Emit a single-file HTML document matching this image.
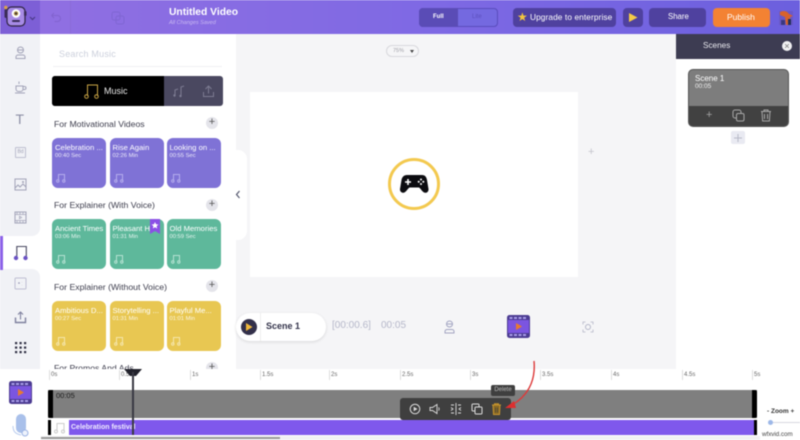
<!DOCTYPE html>
<html><head><meta charset="utf-8"><style>
*{box-sizing:border-box;margin:0;padding:0}
html,body{width:800px;height:440px;overflow:hidden;background:#fff;font-family:"Liberation Sans",sans-serif}
#w{position:relative;width:800px;height:440px;overflow:hidden;filter:blur(.5px)}
.a{position:absolute}
.t{position:absolute;white-space:nowrap;line-height:1}
.card{position:absolute;width:54px;height:50px;border-radius:6px;color:#fff}
.card b{position:absolute;left:3px;top:5px;font-weight:normal;font-size:7.7px;white-space:nowrap;width:50px;overflow:hidden}
.card i{position:absolute;left:3px;top:15px;font-style:normal;font-size:5.8px;opacity:.85;white-space:nowrap}
.card svg{position:absolute;left:4px;top:35px}
.h{position:absolute;left:54px;font-size:8.7px;color:#3c3c4c;white-space:nowrap}
.pl{position:absolute;left:206px;width:12px;height:12px;border-radius:50%;background:#e4e4ea;color:#555;font-size:11px;line-height:11px;text-align:center}
.r{position:absolute;top:370px;height:10px;border-left:1px solid #ddd;padding-left:1px;font-size:6px;line-height:10px;color:#666}
svg{display:block}
</style></head><body><div id="w">
<div class="a" style="left:0;top:0;width:800px;height:34px;background:linear-gradient(90deg,#9270e2 0%,#7e69e4 55%,#6c60de 100%)"></div>
<div class="a" style="left:0;top:0;width:40px;height:34px;background:#7d5fd6"></div>
<svg class="a" style="left:3px;top:4px" width="24" height="24" viewBox="0 0 24 24"><rect x="4" y="3" width="18" height="19" rx="4.500" fill="#a78be6" stroke="#2e2440" stroke-width="1.200"/><rect x="1.500" y="5" width="3" height="9" rx="1.500" fill="#3a2c58"/><circle cx="2.800" cy="3.500" r="1.700" fill="#d9a24c"/><rect x="21" y="7" width="2.500" height="5" rx="1" fill="#3a2c58"/><circle cx="13" cy="9.500" r="4.300" fill="#fff"/><circle cx="13" cy="9.500" r="2.200" fill="#a78a3a"/><circle cx="13" cy="9.500" r="1" fill="#2e2440"/><rect x="9" y="16" width="8" height="2" rx="1" fill="#3a2c58"/></svg>
<svg class="a" style="left:29px;top:16px" width="7" height="5" viewBox="0 0 7 5"><path d="M1 1l2.500 2.500L6 1" stroke="#4a3a86" stroke-width="1.200" fill="none"/></svg>
<svg class="a" style="left:50px;top:12px" width="12" height="11" viewBox="0 0 12 11"><path d="M1.500 3.500h6a3 3 0 0 1 0 6h-3M1.500 3.500L4 1M1.500 3.500L4 6" stroke="#8163cf" fill="none"/></svg>
<div class="a" style="left:70px;top:0;width:1px;height:34px;background:#8a6cd8"></div>
<svg class="a" style="left:111px;top:11px" width="14" height="14" viewBox="0 0 14 14"><rect x="1" y="1" width="8" height="8" rx="2" stroke="#7f66d2" fill="none"/><rect x="5" y="5" width="8" height="8" rx="2" stroke="#7f66d2" fill="none"/></svg>
<div class="t" style="left:169px;top:8px;color:#fff;font-weight:bold;font-size:10.300px">Untitled Video</div>
<div class="t" style="left:169px;top:21px;color:#c9b9f2;font-size:5.500px;font-style:italic">All Changes Saved</div>
<div class="a" style="left:419px;top:8px;width:79px;height:19px;border-radius:4px;background:#7469e0;border:1px solid #5a4cbc"></div>
<div class="a" style="left:419px;top:8px;width:39px;height:19px;border-radius:4px 0 0 4px;background:#5a4cb6"></div>
<div class="t" style="left:433px;top:14px;color:#fff;font-size:6px;font-weight:bold">Full</div>
<div class="t" style="left:472px;top:14px;color:#5c4fbe;font-size:6px">Lite</div>
<div class="a" style="left:513px;top:8px;width:103px;height:19px;border-radius:4px;background:#4f419f"></div>
<div class="t" style="left:517px;top:11px;color:#f4c63d;font-size:12px">★</div>
<div class="t" style="left:530px;top:13px;color:#fff;font-size:8.300px;letter-spacing:.1px">Upgrade to enterprise</div>
<div class="a" style="left:623px;top:8px;width:20px;height:19px;border-radius:4px;background:#4f419f"></div>
<svg class="a" style="left:628px;top:12px" width="11" height="11" viewBox="0 0 11 11"><path d="M1 1l8.500 4.500L1 10z" fill="#f4cb47"/></svg>
<div class="a" style="left:649px;top:8px;width:57px;height:19px;border-radius:4px;background:#4f419f"></div>
<div class="t" style="left:668px;top:13px;color:#fff;font-size:7.800px">Share</div>
<div class="a" style="left:713px;top:8px;width:57px;height:19px;border-radius:4px;background:#f38233"></div>
<div class="t" style="left:727px;top:13px;color:#fff;font-size:8.500px">Publish</div>
<svg class="a" style="left:778px;top:9px" width="17" height="17" viewBox="0 0 17 17"><rect x="1" y="2" width="14" height="14" fill="#6a58c8"/><path d="M2 3c4-2 7-1 9 2l4 2-3 1 1 8H8L7 8 2 6z" fill="#d8622c"/><path d="M10 10h3v6h-3z" fill="#24305c"/><path d="M3 11h4v5H3z" fill="#3b3880"/></svg>

<div class="a" style="left:0;top:34px;width:40px;height:335px;background:#fff"></div>
<div class="a" style="left:0;top:34px;width:40px;height:202px;background:#f1f2f6;border-radius:0 0 8px 0"></div>
<div class="a" style="left:0;top:269px;width:40px;height:100px;background:#f1f2f6;border-radius:0 8px 0 0"></div>
<div class="a" style="left:0;top:236px;width:3px;height:34px;background:#8c62e8"></div>
<svg class="a" style="left:14px;top:46px" width="13" height="14" viewBox="0 0 13 14"><circle cx="6.500" cy="4" r="3" fill="none" stroke="#a2a3b8"/><path d="M3.500 4h6M2 12.500V11a2 2 0 0 1 2-2h5a2 2 0 0 1 2 2v1.500z" fill="none" stroke="#a2a3b8"/></svg>
<svg class="a" style="left:14px;top:80px" width="13" height="14" viewBox="0 0 13 14"><path d="M2 6h7v3a2.500 2.500 0 0 1-2.500 2.500h-2A2.500 2.500 0 0 1 2 9zM9 6.500h1.500a1.300 1.300 0 0 1 0 3H9M1 13h10M5 1.500V4" fill="none" stroke="#a2a3b8"/></svg>
<div class="t" style="left:15.500px;top:112px;color:#8d90a6;font-size:14px">T</div>
<div class="a" style="left:15px;top:147px;width:11px;height:11px;border:1px solid #bdbfd0;border-radius:1px;color:#a0a2b6;font-size:5px;line-height:9px;text-align:center">Bd</div>
<svg class="a" style="left:14px;top:178px" width="13" height="13" viewBox="0 0 13 13"><rect x="1" y="1" width="11" height="11" fill="none" stroke="#a2a3b8"/><path d="M1 10l3-3 2 2 3-3 3 3" fill="none" stroke="#a2a3b8"/><circle cx="9" cy="4" r="1" fill="#a2a3b8"/></svg>
<svg class="a" style="left:14px;top:211px" width="13" height="13" viewBox="0 0 13 13"><rect x="1" y="1" width="11" height="11" fill="none" stroke="#a2a3b8"/><path d="M1 3.500h11M1 9.500h11M3 1v2.500M6 1v2.500M9 1v2.500M3 9.500V12M6 9.500V12M9 9.500V12M5.500 5.200l2.200 1.300-2.200 1.300z" fill="none" stroke="#a2a3b8" stroke-width=".7"/></svg>
<svg class="a" style="left:13px;top:245px" width="15" height="16" viewBox="0 0 15 16"><path d="M3.800 13V1.500h9.500V13" fill="none" stroke="#47475f" stroke-width="1.100"/><circle cx="3" cy="13" r="2.200" fill="#6b52c4"/><circle cx="12.500" cy="13" r="2.200" fill="#6b52c4"/></svg>
<svg class="a" style="left:14px;top:277px" width="13" height="13" viewBox="0 0 13 13"><rect x="1" y="1" width="11" height="11" rx="1" fill="none" stroke="#bdbfd2"/><circle cx="5" cy="6" r=".8" fill="#8a8cab"/><path d="M8 5v.1M8 8v.1" stroke="#8a8cab"/></svg>
<svg class="a" style="left:14px;top:310px" width="13" height="14" viewBox="0 0 13 14"><path d="M6.500 9.500V2M4 4.500L6.500 2 9 4.500" fill="none" stroke="#7f819e" stroke-width="1.100"/><path d="M1.500 7.500v5h10v-5" fill="none" stroke="#7f819e" stroke-width="1.400"/></svg>
<svg class="a" style="left:15px;top:342px" width="12" height="12" viewBox="0 0 12 12" fill="#2e2e42"><rect x="0" y="0" width="2.200" height="2.200"/><rect x="4.500" y="0" width="2.200" height="2.200"/><rect x="9" y="0" width="2.200" height="2.200"/><rect x="0" y="4.500" width="2.200" height="2.200"/><rect x="4.500" y="4.500" width="2.200" height="2.200"/><rect x="9" y="4.500" width="2.200" height="2.200"/><rect x="0" y="9" width="2.200" height="2.200"/><rect x="4.500" y="9" width="2.200" height="2.200"/><rect x="9" y="9" width="2.200" height="2.200"/></svg>

<div class="t" style="left:59px;top:50px;color:#ccd0dc;font-size:9px;letter-spacing:.2px">Search Music</div>
<div class="a" style="left:53px;top:66px;width:169px;height:1px;background:#f0f0f3"></div>
<div class="a" style="left:52px;top:76px;width:171px;height:30px;border-radius:3px;background:#4a4860"></div>
<div class="a" style="left:52px;top:76px;width:112px;height:30px;border-radius:3px 0 0 3px;background:#000"></div>
<svg class="a" style="left:84px;top:83px" width="15" height="16" viewBox="0 0 15 16"><path d="M3.500 13V2h10v11" fill="none" stroke="#c9a445"/><circle cx="2.500" cy="13.500" r="1.800" fill="none" stroke="#c9a445"/><circle cx="12.500" cy="13.500" r="1.800" fill="none" stroke="#c9a445"/></svg>
<div class="t" style="left:104px;top:87px;color:#e8e8e8;font-size:9px">Music</div>
<svg class="a" style="left:172px;top:84px" width="14" height="14" viewBox="0 0 14 14"><path d="M3 11V6l3-1M9 12V3l3-1" fill="none" stroke="#7d7c92"/><circle cx="2.500" cy="11.500" r="1.200" fill="#7d7c92"/><circle cx="8.500" cy="12" r="1.200" fill="#7d7c92"/></svg>
<svg class="a" style="left:202px;top:84px" width="13" height="14" viewBox="0 0 13 14"><path d="M6.500 9.500V2M3.500 5L6.500 2 9.500 5M1.500 8v4.500h10V8" fill="none" stroke="#7d7c92"/></svg>

<div class="h" style="top:119px">For Motivational Videos</div><div class="pl" style="top:117px">+</div>
<div class="h" style="top:200px">For Explainer (With Voice)</div><div class="pl" style="top:199px">+</div>
<div class="h" style="top:282px">For Explainer (Without Voice)</div><div class="pl" style="top:280px">+</div>
<div class="h" style="top:363px">For Promos And Ads</div><div class="pl" style="top:362px">+</div>

<div class="card" style="left:52px;top:138px;background:#7f72d6"><b>Celebration ...</b><i>00:40 Sec</i><svg width="10" height="10" viewBox="0 0 10 10"><path d="M2.500 8V1.500h6V8" fill="none" stroke="#b4aced"/><circle cx="1.800" cy="8" r="1.200" fill="none" stroke="#b4aced"/><circle cx="7.800" cy="8" r="1.200" fill="none" stroke="#b4aced"/></svg></div>
<div class="card" style="left:109.500px;top:138px;background:#7f72d6"><b>Rise Again</b><i>02:26 Min</i><svg width="10" height="10" viewBox="0 0 10 10"><path d="M2.500 8V1.500h6V8" fill="none" stroke="#b4aced"/><circle cx="1.800" cy="8" r="1.200" fill="none" stroke="#b4aced"/><circle cx="7.800" cy="8" r="1.200" fill="none" stroke="#b4aced"/></svg></div>
<div class="card" style="left:166.500px;top:138px;background:#7f72d6"><b>Looking on ...</b><i>00:55 Sec</i><svg width="10" height="10" viewBox="0 0 10 10"><path d="M2.500 8V1.500h6V8" fill="none" stroke="#b4aced"/><circle cx="1.800" cy="8" r="1.200" fill="none" stroke="#b4aced"/><circle cx="7.800" cy="8" r="1.200" fill="none" stroke="#b4aced"/></svg></div>

<div class="card" style="left:52px;top:219px;background:#5eb89b"><b>Ancient Times</b><i>03:06 Min</i><svg width="10" height="10" viewBox="0 0 10 10"><path d="M2.500 8V1.500h6V8" fill="none" stroke="#b5e2d2"/><circle cx="1.800" cy="8" r="1.200" fill="none" stroke="#b5e2d2"/><circle cx="7.800" cy="8" r="1.200" fill="none" stroke="#b5e2d2"/></svg></div>
<div class="card" style="left:109.500px;top:219px;background:#5eb89b"><b>Pleasant Ha</b><i>01:31 Min</i><svg width="10" height="10" viewBox="0 0 10 10"><path d="M2.500 8V1.500h6V8" fill="none" stroke="#b5e2d2"/><circle cx="1.800" cy="8" r="1.200" fill="none" stroke="#b5e2d2"/><circle cx="7.800" cy="8" r="1.200" fill="none" stroke="#b5e2d2"/></svg></div>
<div class="card" style="left:166.500px;top:219px;background:#5eb89b"><b>Old Memories</b><i>00:59 Sec</i><svg width="10" height="10" viewBox="0 0 10 10"><path d="M2.500 8V1.500h6V8" fill="none" stroke="#b5e2d2"/><circle cx="1.800" cy="8" r="1.200" fill="none" stroke="#b5e2d2"/><circle cx="7.800" cy="8" r="1.200" fill="none" stroke="#b5e2d2"/></svg></div>
<svg class="a" style="left:150px;top:219px" width="10" height="15" viewBox="0 0 10 15"><path d="M0 0h10v15L5 12 0 15z" fill="#8b4fe6"/><path d="M5 3l1 2.300 2.400.2-1.800 1.600.6 2.400L5 8.200 2.800 9.500l.6-2.400L1.600 5.500 4 5.300z" fill="#fff"/></svg>

<div class="card" style="left:52px;top:301px;background:#e8c752"><b>Ambitious D...</b><i>00:27 Sec</i><svg width="10" height="10" viewBox="0 0 10 10"><path d="M2.500 8V1.500h6V8" fill="none" stroke="#f5e6ac"/><circle cx="1.800" cy="8" r="1.200" fill="none" stroke="#f5e6ac"/><circle cx="7.800" cy="8" r="1.200" fill="none" stroke="#f5e6ac"/></svg></div>
<div class="card" style="left:109.500px;top:301px;background:#e8c752"><b>Storytelling ...</b><i>01:31 Min</i><svg width="10" height="10" viewBox="0 0 10 10"><path d="M2.500 8V1.500h6V8" fill="none" stroke="#f5e6ac"/><circle cx="1.800" cy="8" r="1.200" fill="none" stroke="#f5e6ac"/><circle cx="7.800" cy="8" r="1.200" fill="none" stroke="#f5e6ac"/></svg></div>
<div class="card" style="left:166.500px;top:301px;background:#e8c752"><b>Playful Me...</b><i>01:01 Min</i><svg width="10" height="10" viewBox="0 0 10 10"><path d="M2.500 8V1.500h6V8" fill="none" stroke="#f5e6ac"/><circle cx="1.800" cy="8" r="1.200" fill="none" stroke="#f5e6ac"/><circle cx="7.800" cy="8" r="1.200" fill="none" stroke="#f5e6ac"/></svg></div>

<div class="a" style="left:236px;top:34px;width:440px;height:335px;background:#f5f5f7"></div>
<div class="a" style="left:236px;top:150px;width:11px;height:90px;background:#fff;border-radius:0 9px 9px 0"></div>
<svg class="a" style="left:235px;top:190px" width="6" height="9" viewBox="0 0 6 9"><path d="M4.500 1L1.500 4.500 4.500 8" fill="none" stroke="#55586e" stroke-width="1.200"/></svg>
<div class="a" style="left:386px;top:45px;width:33px;height:12px;border:1px solid #d8d8dd;border-radius:6px;background:#f5f5f7;color:#a0a0a8;font-size:5.500px;line-height:10px;padding-left:6px">75%<span style="position:absolute;right:4px;top:3.500px;border:2px solid transparent;border-top:3px solid #444"></span></div>
<div class="a" style="left:250px;top:92px;width:328px;height:185px;background:#fff"></div>
<div class="a" style="left:388px;top:158px;width:52px;height:52px;border:3px solid #f3c94f;border-radius:50%"></div>
<svg class="a" style="left:400px;top:174px" width="29" height="20" viewBox="0 0 29 20"><path d="M7 1h15c3 0 4.500 2 5 5l1.500 9c.3 2.500-2 4.500-4.300 3.500-2-.8-3.500-4-5.200-5H9.500c-1.700 1-3.200 4.200-5.200 5C2 19.500-.3 17.500 0 15L1.500 6C2 3 4 1 7 1z" fill="#0c0c10"/><path d="M8 5v6M5 8h6" stroke="#fff" stroke-width="1.600"/><circle cx="21" cy="5.500" r="1" fill="#fff"/><circle cx="21" cy="10" r="1" fill="#fff"/><circle cx="18.700" cy="7.700" r="1" fill="#fff"/><circle cx="23.300" cy="7.700" r="1" fill="#fff"/></svg>
<div class="t" style="left:588px;top:147px;color:#c4c4cc;font-size:11px">+</div>

<div class="a" style="left:236px;top:313px;width:90px;height:28px;background:#fff;border-radius:14px;box-shadow:0 1px 3px rgba(0,0,0,.12)"></div>
<div class="a" style="left:260px;top:313px;width:1px;height:28px;background:#eee"></div>
<div class="a" style="left:241px;top:319px;width:16px;height:16px;border-radius:50%;background:#33304a"></div>
<svg class="a" style="left:245px;top:323px" width="8" height="8" viewBox="0 0 8 8"><path d="M1 0l6.500 4L1 8z" fill="#f0b83c"/></svg>
<div class="t" style="left:266px;top:322px;color:#33334a;font-size:9px;font-weight:bold">Scene 1</div>
<div class="t" style="left:332px;top:321px;color:#b6b8ca;font-size:10px">[00:00.6]</div>
<div class="t" style="left:381px;top:321px;color:#b6b8ca;font-size:10px">00:05</div>
<svg class="a" style="left:443px;top:320px" width="13" height="14" viewBox="0 0 13 14"><circle cx="6.500" cy="4" r="3" fill="none" stroke="#a3a5c2"/><path d="M3.500 4h6M2 13v-1.500a2 2 0 0 1 2-2h5a2 2 0 0 1 2 2V13z" fill="none" stroke="#a3a5c2"/></svg>
<svg class="a" style="left:507px;top:315px" width="23" height="23" viewBox="0 0 23 23"><rect width="23" height="23" rx="2.500" fill="#4c3c92"/><rect x="1" y="5" width="21" height="13" fill="#7b55e0"/><path d="M2.500 2h3v2h-3zM7 2h3v2H7zM11.500 2h3v2h-3zM16 2h3v2h-3zM2.500 19h3v2h-3zM7 19h3v2H7zM11.500 19h3v2h-3zM16 19h3v2h-3z" fill="#a89ce8"/><path d="M9 8l6 3.500L9 15z" fill="#e87a30"/></svg>
<svg class="a" style="left:582px;top:321px" width="12" height="12" viewBox="0 0 12 12"><path d="M1 3.500V1h2.500M8.500 1H11v2.500M11 8.500V11H8.500M3.500 11H1V8.500" fill="none" stroke="#b5b7c8" stroke-width=".8"/><circle cx="6" cy="6" r="2.500" fill="none" stroke="#b5b7c8"/></svg>

<div class="a" style="left:676px;top:34px;width:124px;height:335px;background:#fff"></div>
<div class="a" style="left:676px;top:34px;width:124px;height:25px;background:#3d3c52"></div>
<div class="t" style="left:703px;top:42px;color:#e8e8ee;font-size:8.200px">Scenes</div>
<div class="a" style="left:782px;top:41px;width:10px;height:10px;border-radius:50%;background:#f0f0f2"></div>
<svg class="a" style="left:785px;top:44px" width="4" height="4" viewBox="0 0 4 4"><path d="M0 0l4 4M4 0L0 4" stroke="#777" stroke-width=".7"/></svg>
<div class="a" style="left:688px;top:69px;width:101px;height:58px;border-radius:5px;background:#7d7d7d;border:1px solid #555"></div>
<div class="a" style="left:689px;top:106px;width:99px;height:20px;border-radius:0 0 4px 4px;background:#414141"></div>
<div class="t" style="left:695px;top:75px;color:#fff;font-size:8px">Scene 1</div>
<div class="t" style="left:695px;top:84px;color:#f0f0f0;font-size:6.500px">00:05</div>
<div class="t" style="left:706px;top:110px;color:#a4a4a4;font-size:11px">+</div>
<svg class="a" style="left:732px;top:109px" width="13" height="13" viewBox="0 0 13 13"><rect x="1" y="1" width="8" height="8" rx="2" fill="none" stroke="#a8a8a8"/><rect x="4.500" y="4.500" width="7.500" height="7.500" rx="1.500" fill="#414141" stroke="#a8a8a8"/></svg>
<svg class="a" style="left:760px;top:109px" width="12" height="13" viewBox="0 0 12 13"><path d="M1 2.500h10M4 2.500V1h4v1.500M2 2.500l.6 9.500h6.800l.6-9.500M4.500 5v5M7.500 5v5" fill="none" stroke="#a8a8a8"/></svg>
<div class="a" style="left:731px;top:131px;width:14px;height:13px;border-radius:2px;background:#e9eaf2"></div>
<svg class="a" style="left:734px;top:134px" width="8" height="8" viewBox="0 0 8 8"><path d="M4 0v8M0 4h8" stroke="#b8bac8"/></svg>

<div class="a" style="left:0;top:369px;width:800px;height:71px;background:#fff"></div>
<div class="a" style="left:41px;top:436px;width:719px;height:4px;background:#f1f1f3"></div>
<svg class="a" style="left:9px;top:381px" width="23" height="23" viewBox="0 0 23 23"><rect width="23" height="23" rx="2.500" fill="#4c3c92"/><rect x="1" y="5" width="21" height="13" fill="#7b55e0"/><path d="M2.500 2h3v2h-3zM7 2h3v2H7zM11.500 2h3v2h-3zM16 2h3v2h-3zM2.500 19h3v2h-3zM7 19h3v2H7zM11.500 19h3v2h-3zM16 19h3v2h-3z" fill="#a89ce8"/><path d="M9 8l6 3.500L9 15z" fill="#e87a30"/></svg>
<svg class="a" style="left:12px;top:413px" width="18" height="25" viewBox="0 0 18 25"><rect x="4" y="1" width="10" height="19" rx="5" fill="#a9c0ea"/><path d="M1 13c0 6 3 8 8 9" fill="none" stroke="#b8cbee"/><circle cx="13" cy="20" r="3" fill="#eef3fc" stroke="#9db4e4"/></svg>

<div class="r" style="left:49px">0s</div><div class="r" style="left:119px">0.5s</div><div class="r" style="left:190px">1s</div><div class="r" style="left:260px">1.5s</div><div class="r" style="left:329px">2s</div><div class="r" style="left:400px">2.5s</div><div class="r" style="left:470px">3s</div><div class="r" style="left:540px">3.5s</div><div class="r" style="left:611px">4s</div><div class="r" style="left:682px">4.5s</div><div class="r" style="left:752px">5s</div>

<div class="a" style="left:48px;top:390px;width:709px;height:28px;background:#7f7f7f"></div>
<div class="a" style="left:48px;top:390px;width:5px;height:28px;background:#000;border-radius:2px 0 0 2px"></div>
<div class="a" style="left:752px;top:390px;width:5px;height:28px;background:#000;border-radius:0 2px 2px 0"></div>
<div class="t" style="left:56px;top:392px;color:#1a1a1a;font-size:7.500px">00:05</div>
<div class="a" style="left:48px;top:420px;width:3px;height:15px;background:#000"></div>
<svg class="a" style="left:54px;top:422px" width="12" height="12" viewBox="0 0 12 12"><path d="M3 9.500V1.500h7v8" fill="none" stroke="#ccc"/><circle cx="2" cy="9.500" r="1.500" fill="none" stroke="#ccc"/><circle cx="9" cy="9.500" r="1.500" fill="none" stroke="#ccc"/></svg>
<div class="a" style="left:69px;top:420px;width:686px;height:15px;background:#7f58ec"></div>
<div class="a" style="left:754px;top:420px;width:3px;height:15px;background:#000"></div>
<div class="t" style="left:71px;top:424px;color:#f0ecff;font-size:7px;font-weight:bold">Celebration festival</div>
<div class="a" style="left:41px;top:437px;width:239px;height:2px;background:#9a9a9a"></div>
<svg class="a" style="left:124px;top:369px" width="18" height="8" viewBox="0 0 18 8"><path d="M0 0h18l-6 7H6z" fill="#22222c"/></svg>
<div class="a" style="left:132px;top:372px;width:1.500px;height:63px;background:#3a3a44"></div>

<div class="a" style="left:400px;top:398px;width:111px;height:22px;border-radius:3px;background:#3f3f3f"></div>
<svg class="a" style="left:409px;top:403px" width="12" height="12" viewBox="0 0 12 12"><circle cx="6" cy="6" r="4.800" fill="none" stroke="#ddd"/><path d="M4.700 3.700L8.500 6 4.700 8.300z" fill="#ddd"/></svg>
<svg class="a" style="left:429px;top:403px" width="12" height="12" viewBox="0 0 12 12"><path d="M1 4.500h2.500L8 1.500v9L3.500 7.500H1zM9.500 4.500a2 2 0 0 1 0 3" fill="none" stroke="#ddd" stroke-width=".9"/></svg>
<svg class="a" style="left:450px;top:403px" width="12" height="12" viewBox="0 0 12 12"><path d="M6 0v12M1 2h3M8 2h3M1 10h3M8 10h3M1 4.500L3 6 1 7.500M11 4.500L9 6l2 1.500" fill="none" stroke="#ddd" stroke-width=".9"/></svg>
<svg class="a" style="left:471px;top:403px" width="12" height="12" viewBox="0 0 12 12"><rect x="1" y="1" width="7" height="7" rx="1" fill="none" stroke="#ddd"/><rect x="4" y="4" width="7" height="7" rx="1" fill="#3f3f3f" stroke="#ddd"/></svg>
<svg class="a" style="left:491px;top:403px" width="11" height="12" viewBox="0 0 11 12"><path d="M1 2h9M3.500 2V.8h4V2M2 2l.5 9.500h6L9 2z" fill="#8a6a24" stroke="#c8952e"/><path d="M4.500 4.500v5M6.500 4.500v5" stroke="#3f3f3f" stroke-width=".7"/></svg>
<div class="a" style="left:491px;top:385px;width:24px;height:11px;border-radius:2px;background:#3f3f3f;color:#bbb;font-size:6px;line-height:11px;text-align:center">Delete</div>
<svg class="a" style="left:500px;top:360px" width="40" height="55" viewBox="0 0 40 55"><path d="M34 1c2 22-8 36-22 44" fill="none" stroke="#dd3a3a" stroke-width="1.400"/><path d="M5 48l9-7 2 7z" fill="#dd2f2f"/></svg>

<div class="t" style="left:767px;top:409px;color:#333;font-size:6.500px;font-weight:bold">- Zoom +</div>
<div class="a" style="left:771px;top:422px;width:29px;height:1px;background:#d8d8e0"></div>
<div class="a" style="left:768px;top:420px;width:5px;height:5px;border-radius:50%;background:#9db8e8"></div>
<div class="t" style="left:762px;top:432px;color:#444;font-size:6.200px">wfxvid.com</div>
</div></body></html>
